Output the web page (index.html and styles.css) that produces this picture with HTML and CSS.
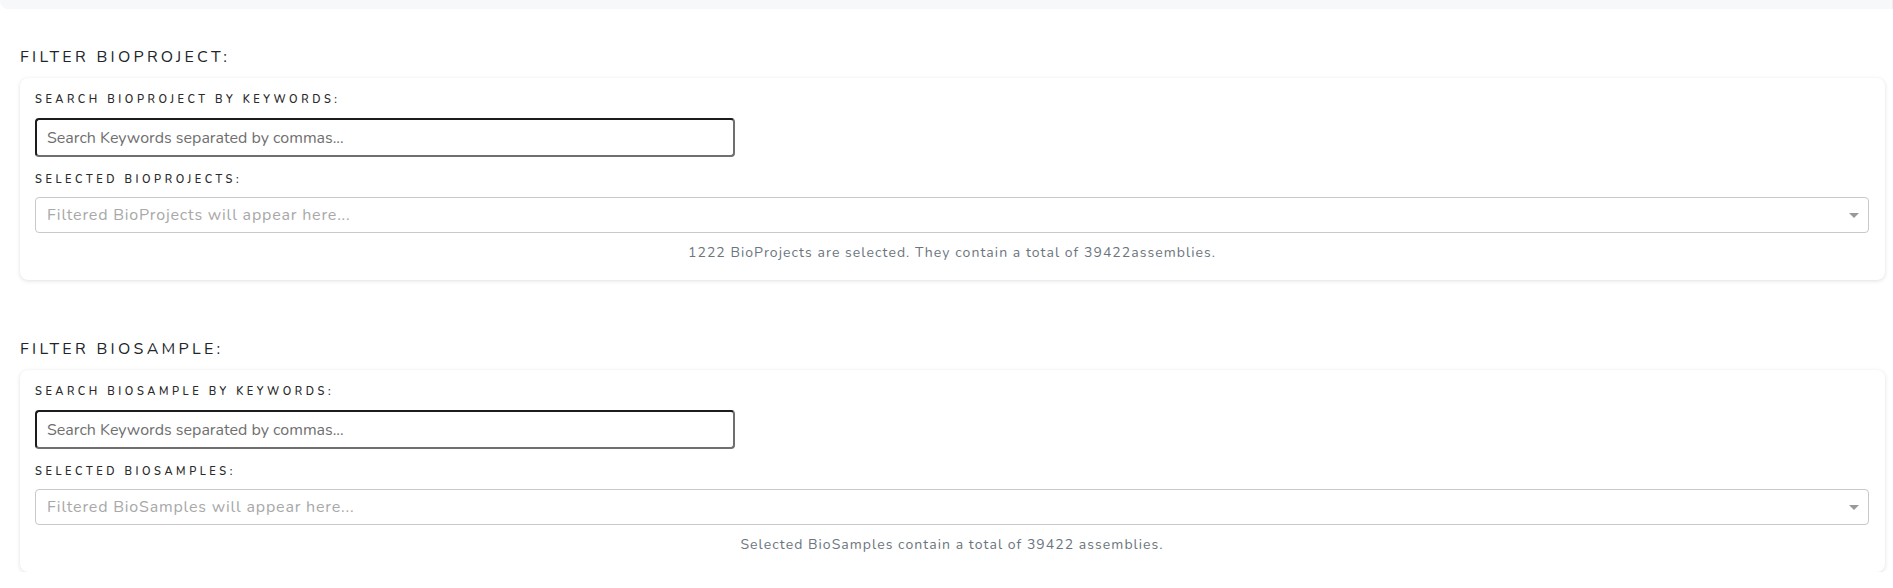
FILE: index.html
```html
<!DOCTYPE html>
<html lang="en">
<head>
<meta charset="utf-8">
<title>Filters</title>
<link rel="stylesheet" href="styles.css">
</head>
<body>
<div class="topbar"></div>

<section class="filter filter-first">
  <h2 class="filter-title">FILTER BIOPROJECT:</h2>
  <div class="card">
    <label class="field-label">SEARCH BIOPROJECT BY KEYWORDS:</label>
    <input class="kw-input" type="text" placeholder="Search Keywords separated by commas...">
    <label class="field-label field-label-second">SELECTED BIOPROJECTS:</label>
    <div class="select">
      <span class="select-ph">Filtered BioProjects will appear here...</span>
      <span class="caret"></span>
    </div>
    <p class="count">1222 BioProjects are selected. They contain a total of 39422assemblies.</p>
  </div>
</section>

<section class="filter filter-second">
  <h2 class="filter-title">FILTER BIOSAMPLE:</h2>
  <div class="card">
    <label class="field-label">SEARCH BIOSAMPLE BY KEYWORDS:</label>
    <input class="kw-input" type="text" placeholder="Search Keywords separated by commas...">
    <label class="field-label field-label-second">SELECTED BIOSAMPLES:</label>
    <div class="select">
      <span class="select-ph">Filtered BioSamples will appear here...</span>
      <span class="caret"></span>
    </div>
    <p class="count">Selected BioSamples contain a total of 39422 assemblies.</p>
  </div>
</section>
</body>
</html>
```

FILE: styles.css
```css
* { box-sizing: border-box; }

html, body {
  margin: 0;
  padding: 0;
  background: #ffffff;
}

body {
  font-family: "Nunito", "Lato", "Noto Sans", sans-serif;
  color: #212529;
}

.topbar {
  height: 9px;
  background: #f7f8fa;
  border-bottom-left-radius: 8px;
  border-right: 1px solid #eceef0;
}

.filter {
  padding: 0 8px 0 20px;
}

.filter-first {
  margin-top: 38px;
}

.filter-second {
  margin-top: 59px;
}

.filter-title {
  margin: 0 0 11px 0;
  font-size: 16px;
  line-height: 20px;
  font-weight: 400;
  letter-spacing: 3.3px;
  color: #212529;
}

.card {
  display: flex;
  flex-direction: column;
  align-items: flex-start;
  background: #ffffff;
  border-radius: 8px;
  box-shadow: 0 1px 4px rgba(0, 0, 0, 0.12), 0 0 1px rgba(0, 0, 0, 0.04);
  padding: 15px 16px 17px 15px;
}

.field-label {
  display: block;
  font-size: 11px;
  line-height: 13px;
  font-weight: 600;
  letter-spacing: 3.55px;
  color: #2b2b2b;
}

.kw-input {
  margin-top: 12px;
  width: 700px;
  height: 39px;
  padding: 0 10px;
  border: 2px solid #1c1c1c;
  border-right-color: #6f6f6f;
  border-bottom-color: #6f6f6f;
  border-radius: 4px;
  font-family: inherit;
  font-size: 16px;
  color: #212529;
  background: #fff;
  outline: none;
}

.kw-input::placeholder {
  color: #6f6f6f;
  opacity: 1;
}

.field-label-second {
  margin-top: 16px;
}

.select {
  margin-top: 11px;
  align-self: stretch;
  height: 36px;
  border: 1px solid #c9c9c9;
  border-radius: 4px;
  display: flex;
  align-items: center;
  justify-content: space-between;
  padding: 0 9px 0 11px;
}

.select-ph {
  font-size: 16px;
  color: #a8a8a8;
  letter-spacing: 0.8px;
}

.caret {
  width: 0;
  height: 0;
  border-left: 5px solid transparent;
  border-right: 5px solid transparent;
  border-top: 5px solid #999999;
  margin-top: 1px;
}

.count {
  align-self: stretch;
  margin: 10px 0 0 0;
  text-align: center;
  font-size: 14px;
  line-height: 20px;
  letter-spacing: 1.05px;
  color: #6c757d;
}
```
